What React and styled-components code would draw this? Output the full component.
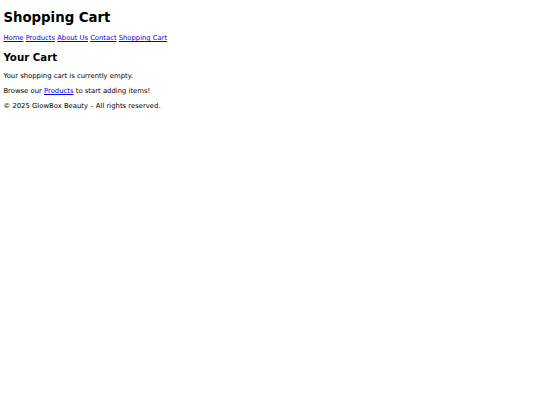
import styled, { createGlobalStyle } from "styled-components";

const GlobalStyle = createGlobalStyle`
  body {
    margin: 3.4px;
    font-family: "DejaVu Sans", sans-serif;
    font-size: 6.85px;
    background: #fff;
    color: #000;
  }
`;

const Title = styled.h1`
  font-size: 13.3px;
  margin: 7px 0 9px;
`;

const Nav = styled.nav`
  font-size: 6.8px;
  a {
    color: #0000ee;
  }
`;

const SectionTitle = styled.h2`
  font-size: 10.25px;
  margin: 8.5px 0 9.5px;
`;

const Text = styled.p`
  margin: 6.7px 0;
  a {
    color: #0000ee;
  }
`;

const App = () => {
  return (
    <>
      <GlobalStyle />
      <header>
        <Title>Shopping Cart</Title>
        <Nav>
          <a href="#">Home</a> <a href="#">Products</a> <a href="#">About Us</a>{" "}
          <a href="#">Contact</a> <a href="#">Shopping Cart</a>
        </Nav>
      </header>
      <main>
        <SectionTitle>Your Cart</SectionTitle>
        <Text>Your shopping cart is currently empty.</Text>
        <Text>
          Browse our <a href="#">Products</a> to start adding items!
        </Text>
      </main>
      <footer>
        <Text>© 2025 GlowBox Beauty – All rights reserved.</Text>
      </footer>
    </>
  );
};

export default App;
